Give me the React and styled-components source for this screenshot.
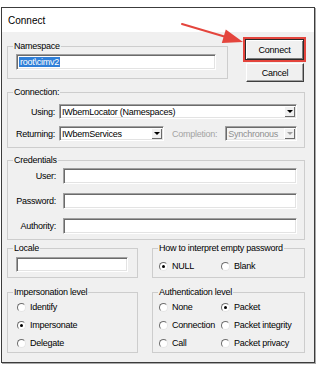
import React from "react";
import styled, { createGlobalStyle } from "styled-components";

const GlobalStyle = createGlobalStyle`
  html, body {
    margin: 0;
    padding: 0;
    background: #ffffff;
  }
  body {
    font-family: "Liberation Sans", Arial, sans-serif;
    font-size: 9px;
    letter-spacing: -0.25px;
    color: #000000;
  }
`;

const Page = styled.div`
  position: relative;
  width: 320px;
  height: 368px;
  padding: 7px 0 0 1px;
  box-sizing: border-box;
`;

const Window = styled.div`
  width: 314px;
  height: 356px;
  box-sizing: border-box;
  border: 1px solid #3c3c3c;
  box-shadow: 1px 1px 0 #a8a8a8;
  display: flex;
  flex-direction: column;
`;

const TitleBar = styled.div`
  flex: none;
  height: 24px;
  background: #ffffff;
  display: flex;
  align-items: center;
  padding-left: 6px;
  font-size: 10px;
  letter-spacing: 0;
`;

const Body = styled.div`
  flex: 1;
  background: #f0f0f0;
  padding: 5px 9px 0 5px;
  display: flex;
  flex-direction: column;
`;

const TopRow = styled.div`
  display: flex;
  align-items: flex-start;
  justify-content: space-between;
  height: 45px;
  margin-right: -1px;
`;

const Row = styled.div`
  display: flex;
  justify-content: space-between;
  margin-top: ${(p) => p.$mt || 0}px;
`;

const Group = styled.fieldset`
  margin: ${(p) => p.$mt || 0}px 0 0 0;
  padding: 0;
  min-width: 0;
  box-sizing: border-box;
  width: ${(p) => (p.$w ? `${p.$w}px` : "auto")};
  border: 1px solid #cdcdcd;
`;

const Caption = styled.legend`
  margin-left: 5px;
  padding: 0 1px;
  line-height: 10px;
  white-space: nowrap;
`;

const GroupBody = styled.div`
  padding: ${(p) => p.$pad};
`;

const FormGrid = styled.div`
  display: grid;
  grid-template-columns: ${(p) => p.$label}px 1fr;
  column-gap: ${(p) => p.$gap}px;
  row-gap: ${(p) => p.$rowGap}px;
  align-items: center;
`;

const Label = styled.span`
  text-align: right;
  white-space: nowrap;
  color: ${(p) => (p.$disabled ? "#a3a3a3" : "#000000")};
  margin: 0 ${(p) => p.$mr || 0}px 0 ${(p) => p.$ml || 0}px;
`;

const Field = styled.div`
  box-sizing: border-box;
  height: ${(p) => p.$h || 16}px;
  width: ${(p) => (p.$w ? `${p.$w}px` : "auto")};
  flex: ${(p) => (p.$w ? "none" : 1)};
  min-width: 0;
  background: ${(p) => (p.$disabled ? "#f4f4f4" : "#ffffff")};
  border: 1px solid;
  border-color: #a0a0a0 #ffffff #ffffff #a0a0a0;
  box-shadow: inset 1px 1px 0 #6b6b6b, inset -1px -1px 0 #e3e3e3;
  display: flex;
  align-items: center;
  padding-left: 2px;
  color: ${(p) => (p.$disabled ? "#8f8f8f" : "#000000")};
  white-space: nowrap;
  overflow: hidden;
`;

const FieldText = styled.span`
  flex: 1;
  line-height: 12px;
`;

const Selected = styled.span`
  background: #2f7fd8;
  color: #ffffff;
  line-height: 10px;
  padding: 0 1px;
`;

const DropButton = styled.span`
  flex: none;
  width: 11px;
  align-self: stretch;
  margin: 1px 1px 1px 0;
  background: #f0f0f0;
  box-shadow: inset 1px 1px 0 #ffffff, inset -1px -1px 0 #6b6b6b;
  display: flex;
  align-items: center;
  justify-content: center;

  &::after {
    content: "";
    border-left: 3px solid transparent;
    border-right: 3px solid transparent;
    border-top: 3px solid ${(p) => (p.$disabled ? "#a0a0a0" : "#000000")};
  }
`;

const InlineRow = styled.div`
  display: flex;
  align-items: center;
`;

const ButtonColumn = styled.div`
  display: flex;
  flex-direction: column;
  align-items: flex-end;
`;

const Highlight = styled.div`
  border: 2px solid #e4453d;
  display: flex;
`;

const Button = styled.button`
  box-sizing: border-box;
  width: ${(p) => p.$w}px;
  height: ${(p) => p.$h}px;
  margin: ${(p) => p.$margin || 0};
  padding: 0;
  font-family: inherit;
  font-size: 9px;
  letter-spacing: -0.25px;
  color: #000000;
  background: #f0f0f0;
  border: 1px solid;
  border-color: ${(p) =>
    p.$default ? "#2a2a2a" : "#ffffff #3f3f3f #3f3f3f #ffffff"};
  box-shadow: ${(p) =>
    p.$default
      ? "inset 1px 1px 0 #ffffff, inset -1px -1px 0 #7a7a7a"
      : "inset -1px -1px 0 #a0a0a0"};
`;

const RadioGrid = styled.div`
  display: grid;
  grid-template-columns: ${(p) => p.$cols};
  grid-auto-rows: 18px;
  padding: ${(p) => p.$pad};
`;

const RadioItem = styled.div`
  display: flex;
  align-items: center;
  white-space: nowrap;
`;

const Radio = styled.span`
  position: relative;
  flex: none;
  box-sizing: border-box;
  width: 9px;
  height: 9px;
  margin-right: 4px;
  border-radius: 50%;
  background: #ffffff;
  border: 1px solid;
  border-color: #6e6e6e #e6e6e6 #e6e6e6 #6e6e6e;

  &::after {
    content: "";
    display: ${(p) => (p.$checked ? "block" : "none")};
    position: absolute;
    left: 2px;
    top: 2px;
    width: 3px;
    height: 3px;
    border-radius: 50%;
    background: #000000;
  }
`;

const Overlay = styled.svg`
  position: absolute;
  left: 0;
  top: 0;
  pointer-events: none;
`;

function Combo({ children, w, disabled }) {
  return (
    <Field $w={w} $h={15} $disabled={disabled}>
      <FieldText>{children}</FieldText>
      <DropButton $disabled={disabled} />
    </Field>
  );
}

function Option({ label, checked }) {
  return (
    <RadioItem>
      <Radio $checked={checked} />
      {label}
    </RadioItem>
  );
}

export default function App() {
  return (
    <>
      <GlobalStyle />
      <Page>
        <Window>
          <TitleBar>Connect</TitleBar>
          <Body>
            <TopRow>
              <Group $w={221} $mt={4}>
                <Caption>Namespace</Caption>
                <GroupBody $pad="3px 8px 8px 8px">
                  <Field $w={200}>
                    <Selected>root\cimv2</Selected>
                  </Field>
                </GroupBody>
              </Group>
              <ButtonColumn>
                <Highlight>
                  <Button $w={59} $h={21} $default>
                    Connect
                  </Button>
                </Highlight>
                <Button $w={58} $h={19} $margin="1px 2px 0 0">
                  Cancel
                </Button>
              </ButtonColumn>
            </TopRow>

            <Group $mt={5}>
              <Caption>Connection:</Caption>
              <GroupBody $pad="7px 7px 6px 0">
                <FormGrid $label={47} $gap={4} $rowGap={7}>
                  <Label>Using:</Label>
                  <Combo>IWbemLocator (Namespaces)</Combo>
                  <Label>Returning:</Label>
                  <InlineRow>
                    <Combo w={105}>IWbemServices</Combo>
                    <Label $disabled $ml={8} $mr={8}>
                      Completion:
                    </Label>
                    <Combo disabled>Synchronous</Combo>
                  </InlineRow>
                </FormGrid>
              </GroupBody>
            </Group>

            <Group $mt={7}>
              <Caption>Credentials</Caption>
              <GroupBody $pad="3px 7px 5px 0">
                <FormGrid $label={48} $gap={7} $rowGap={9}>
                  <Label>User:</Label>
                  <Field />
                  <Label>Password:</Label>
                  <Field />
                  <Label>Authority:</Label>
                  <Field />
                </FormGrid>
              </GroupBody>
            </Group>

            <Row $mt={3}>
              <Group $w={131}>
                <Caption>Locale</Caption>
                <GroupBody $pad="4px 8px 5px 8px">
                  <Field $w={112} $h={15} />
                </GroupBody>
              </Group>
              <Group $w={153}>
                <Caption>How to interpret empty password</Caption>
                <RadioGrid $cols="62px 1fr" $pad="4px 0 0 6px">
                  <Option label="NULL" checked />
                  <Option label="Blank" />
                </RadioGrid>
              </Group>
            </Row>

            <Row $mt={9}>
              <Group $w={131}>
                <Caption>Impersonation level</Caption>
                <RadioGrid $cols="1fr" $pad="1px 0 0 9px">
                  <Option label="Identify" />
                  <Option label="Impersonate" checked />
                  <Option label="Delegate" />
                </RadioGrid>
              </Group>
              <Group $w={153}>
                <Caption>Authentication level</Caption>
                <RadioGrid $cols="62px 1fr" $pad="1px 0 0 6px">
                  <Option label="None" />
                  <Option label="Packet" checked />
                  <Option label="Connection" />
                  <Option label="Packet integrity" />
                  <Option label="Call" />
                  <Option label="Packet privacy" />
                </RadioGrid>
              </Group>
            </Row>
          </Body>
        </Window>

        <Overlay width="320" height="60" viewBox="0 0 320 60">
          <line
            x1="182"
            y1="24"
            x2="226"
            y2="37"
            stroke="#e4453d"
            strokeWidth="2"
            strokeLinecap="round"
          />
          <polygon points="243,42 225.8,29.6 221.8,43" fill="#e4453d" />
        </Overlay>
      </Page>
    </>
  );
}
